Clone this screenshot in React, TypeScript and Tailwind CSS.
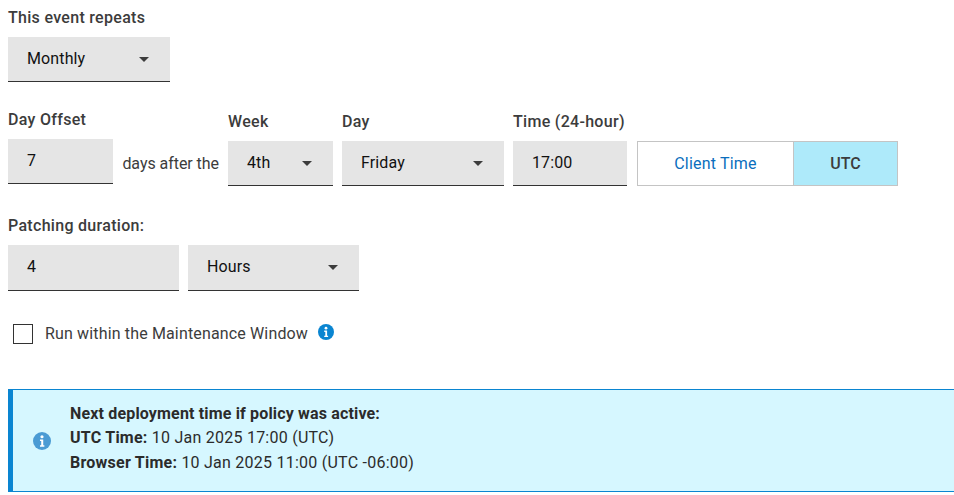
const labelClass = 'block text-[16px] leading-[20px] font-medium text-[#3c3c3c] tracking-[0.3px]';

function Caret() {
  return <span className="ml-auto h-0 w-0 border-x-[5px] border-t-[5px] border-x-transparent border-t-[#3c3c3c]" />;
}

function SelectBox({ value, width, height = 'h-[45px]' }: { value: string; width: string; height?: string }) {
  return (
    <div className={`${width} ${height} flex items-center border-b-[1px] border-[#333] bg-[#e5e5e5] pl-[19px] pr-[21px] text-[16px] tracking-[0.12px] text-[#111]`}>
      <span className="-mt-[1px]">{value}</span>
      <Caret />
    </div>
  );
}

function InputBox({ value, width, height = 'h-[45px]' }: { value: string; width: string; height?: string }) {
  return (
    <div className={`${width} ${height} flex items-center border-b-[1px] border-[#333] bg-[#e5e5e5] pl-[19px] text-[16px] tracking-[0.12px] text-[#111]`}>
      <span className="-mt-[1px]">{value}</span>
    </div>
  );
}

function InfoIcon({ className }: { className: string }) {
  return (
    <svg viewBox="0 0 16 16" className={className}>
      <circle cx="8" cy="8" r="8" fill="currentColor" />
      <circle cx="8" cy="4.2" r="1.4" fill="#fff" />
      <path d="M6.2 6.6h2.9v5.2h1v1.3H6.2v-1.3h1.1V7.9H6.2z" fill="#fff" />
    </svg>
  );
}

export default function App() {
  return (
    <div className="h-[495px] w-[954px] overflow-hidden bg-white pl-2 font-['Roboto',sans-serif]">
      <div className="pt-[8px]">
        <span className={labelClass}>This event repeats</span>
        <div className="mt-[9px]">
          <SelectBox value="Monthly" width="w-[162px]" />
        </div>
      </div>

      <div className="mt-[28px] flex items-end">
        <div className="mb-[2px] w-[105px]">
          <span className={labelClass}>Day Offset</span>
          <div className="mt-[9px]">
            <InputBox value="7" width="w-[105px]" />
          </div>
        </div>
        <div className="flex h-[45px] w-[115px] items-center justify-end pr-[9px] text-[16px] text-[#3c3c3c]">
          <span className="tracking-[-0.05px]">days after the</span>
        </div>
        <div className="w-[105px]">
          <span className={labelClass}>Week</span>
          <div className="mt-[9px]">
            <SelectBox value="4th" width="w-[105px]" />
          </div>
        </div>
        <div className="ml-[9px] w-[162px]">
          <span className={labelClass}>Day</span>
          <div className="mt-[9px]">
            <SelectBox value="Friday" width="w-[162px]" />
          </div>
        </div>
        <div className="ml-[9px] w-[114px]">
          <span className={labelClass}>Time (24-hour)</span>
          <div className="mt-[9px]">
            <InputBox value="17:00" width="w-[114px]" />
          </div>
        </div>
        <div className="ml-[10px] flex h-[45px] w-[261px] border border-[#c4c4c4] text-[16px]">
          <div className="flex w-[155px] items-center justify-center bg-white pt-[1px] tracking-[0.2px] text-[#0a6ebd]">Client Time</div>
          <div className="flex flex-1 items-center justify-center border-l border-[#c4c4c4] bg-[#aeeafa] pt-[1px] font-medium text-[#3c3c3c]">UTC</div>
        </div>
      </div>

      <div className="mt-[30px]">
        <span className={labelClass}>Patching duration:</span>
        <div className="mt-[9px] flex gap-[9px]">
          <InputBox value="4" width="w-[171px]" height="h-[46px]" />
          <SelectBox value="Hours" width="w-[171px]" height="h-[46px]" />
        </div>
      </div>

      <div className="mt-[32px] flex items-center pl-[5px]">
        <div className="h-[20px] w-[20px] border border-[#333] bg-white" />
        <span className="ml-[12px] pt-[1px] text-[16px] leading-[20px] tracking-[0.15px] text-[#3c3c3c]">Run within the Maintenance Window</span>
        <InfoIcon className="ml-[10px] -mt-[3px] h-[16px] w-[16px] text-[#0a85d1]" />
      </div>

      <div className="mt-[45px] flex h-[103px] items-center border-y border-l-[5px] border-[#0a85d1] bg-[#d6f7ff]">
        <InfoIcon className="ml-[20px] h-[18px] w-[18px] text-[#4a9bd4]" />
        <div className="ml-[19px] pb-[4px] text-[16px] leading-[24.5px] tracking-[0.24px] text-[#2b2b2b]">
          <div className="font-bold tracking-[0.16px]">Next deployment time if policy was active:</div>
          <div><span className="font-bold">UTC Time:</span> 10 Jan 2025 17:00 (UTC)</div>
          <div><span className="font-bold">Browser Time:</span> 10 Jan 2025 11:00 (UTC -06:00)</div>
        </div>
      </div>
    </div>
  );
}
